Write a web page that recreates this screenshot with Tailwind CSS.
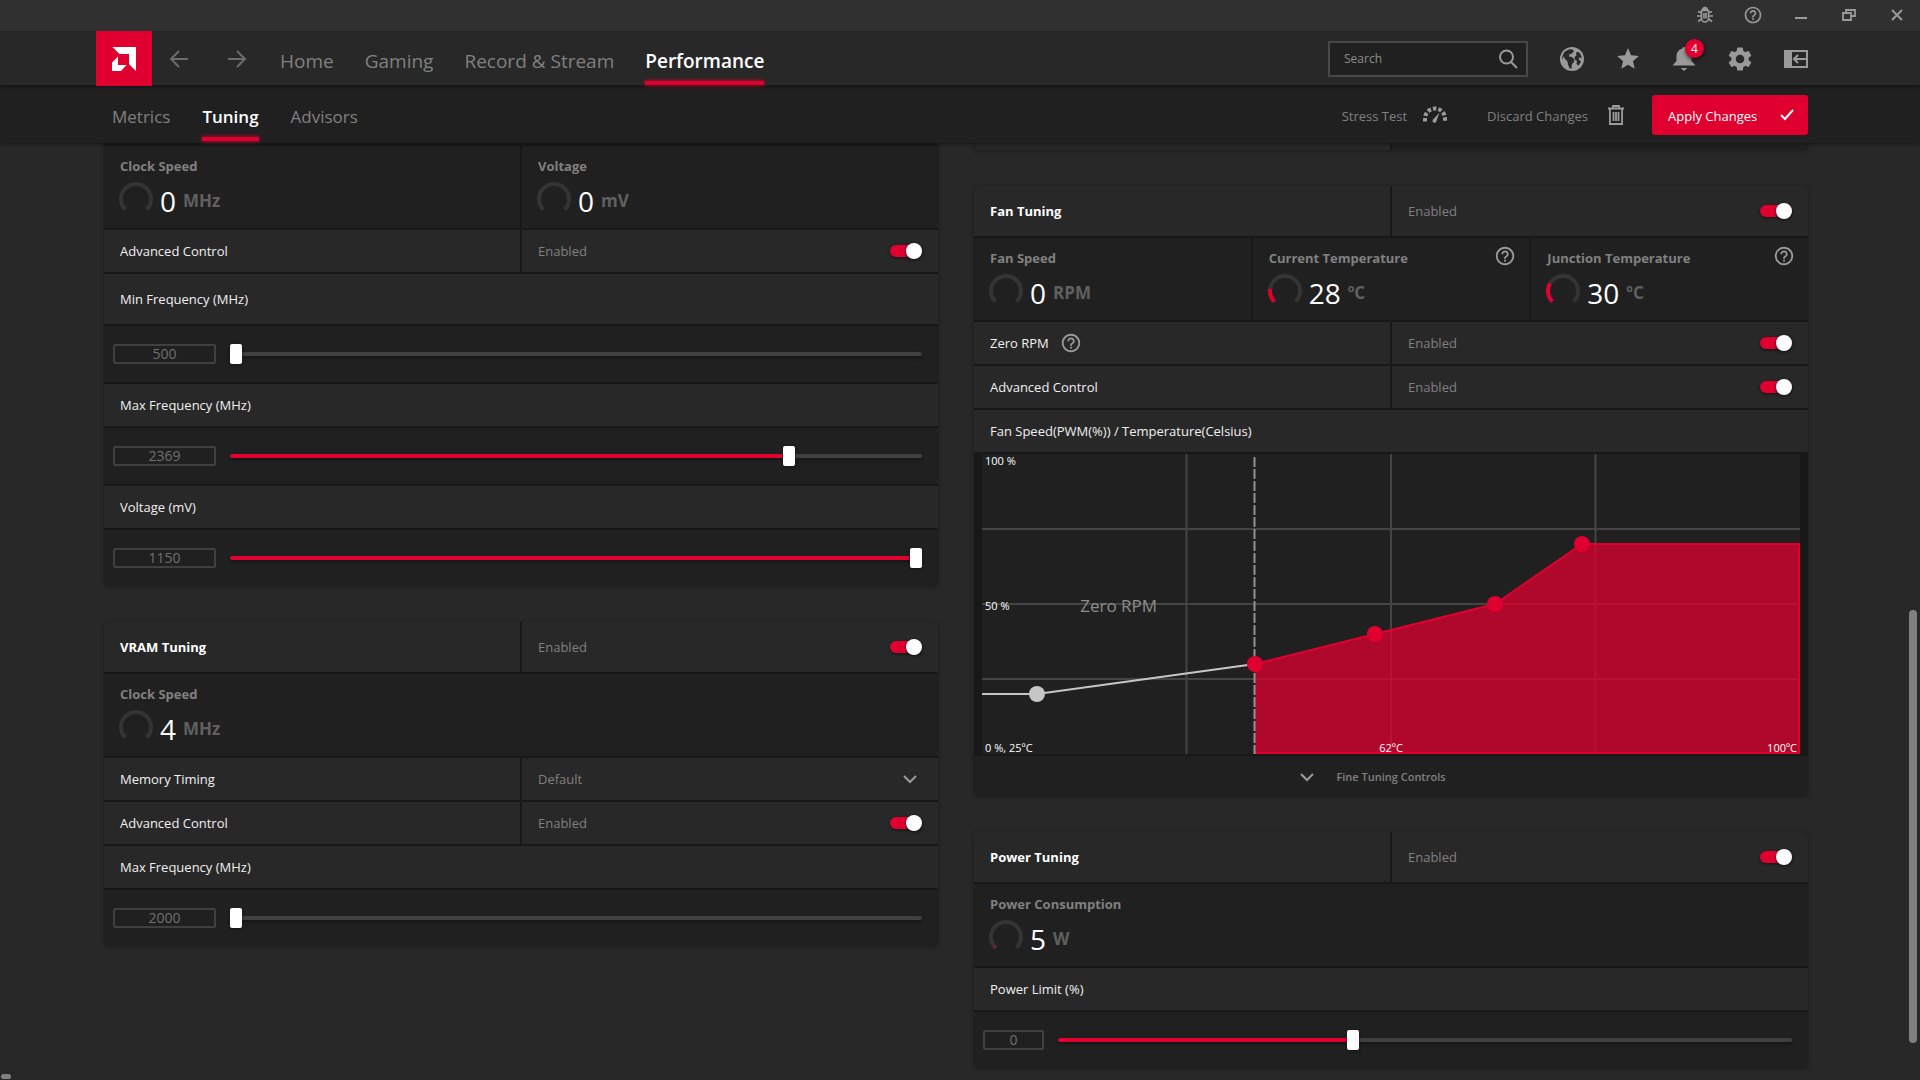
<!DOCTYPE html>
<html lang="en">
<head>
<meta charset="utf-8">
<meta name="viewport" content="width=device-width, initial-scale=1">
<title>Performance – Tuning</title>
<script src="https://cdn.jsdelivr.net/npm/@tailwindcss/browser@4"></script>
</head>
<body class="relative flex h-screen flex-col overflow-hidden bg-[#282828] font-['Open_Sans','Noto_Sans',sans-serif] text-[13px] leading-5 text-[#f0f0f0]">

<!-- Shared icon symbols -->
<svg class="hidden" aria-hidden="true">
  <symbol id="help" viewBox="0 0 24 24"><path fill="currentColor" d="M11 18h2v-2h-2v2zm1-16C6.48 2 2 6.48 2 12s4.48 10 10 10 10-4.48 10-10S17.52 2 12 2zm0 18c-4.41 0-8-3.59-8-8s3.59-8 8-8 8 3.59 8 8-3.59 8-8 8zm0-14c-2.21 0-4 1.79-4 4h2c0-1.1.9-2 2-2s2 .9 2 2c0 2-3 1.75-3 5h2c0-2.25 3-2.5 3-5 0-2.21-1.79-4-4-4z"/></symbol>
  <symbol id="chevron" viewBox="0 0 14 10"><path fill="none" stroke="currentColor" stroke-width="2" d="M1 2l6 6 6-6"/></symbol>
  <symbol id="gauge" viewBox="0 0 34 30"><path fill="none" stroke="#343434" stroke-width="4" d="M6.4 27.6A15 15 0 1 1 27.6 27.6"/></symbol>
</svg>

<!-- Window title bar -->
<div class="flex h-[31px] shrink-0 items-center justify-end bg-[#303030] pb-px pr-[13px] text-[#9a9a9a]">
  <div class="flex gap-7">
    <button aria-label="Report a bug" class="flex size-5 items-center justify-center"><svg class="size-5" viewBox="0 0 20 20" fill="none" stroke="currentColor" stroke-width="1.6"><path d="M6.5 5.5h7v8a3.5 3.5 0 0 1-7 0zM8 5a2 2 0 0 1 4 0M6.500 8L3 6.500M13.500 8L17 6.500M6.500 11H2M13.500 11H18M6.500 14L3 16.500M13.500 14L17 16.500M9 8v5.500M11 8v5.500"/><path fill="currentColor" d="M8 4.500a2 2 0 0 1 4 0z"/></svg></button>
    <button aria-label="Help" class="flex size-5 items-center justify-center"><svg class="size-5"><use href="#help"/></svg></button>
    <button aria-label="Minimize" class="flex size-5 items-center justify-center"><svg class="size-5" viewBox="0 0 20 20"><path fill="currentColor" d="M4 12h12v2H4z"/></svg></button>
    <button aria-label="Restore" class="flex size-5 items-center justify-center"><svg class="size-5" viewBox="0 0 20 20" fill="none" stroke="currentColor" stroke-width="1.800"><path d="M4 8h8v7H4zM7 8V5h9v6h-4"/></svg></button>
    <button aria-label="Close" class="flex size-5 items-center justify-center"><svg class="size-5" viewBox="0 0 20 20" fill="none" stroke="currentColor" stroke-width="2"><path d="M5 5l10 10M15 5L5 15"/></svg></button>
  </div>
</div>

<!-- Main navigation -->
<header class="relative z-20 flex h-[54px] shrink-0 items-center bg-[#282828] pl-24 pr-28 shadow-[0_2px_3px_#141416]">
  <a href="#" aria-label="AMD" class="flex h-[55px] w-14 shrink-0 items-center justify-center self-start bg-[#e0002f]">
    <svg class="size-[26px]" viewBox="0 0 26 26" fill="#fff"><path d="M1.500 1H25v24l-7-7V8H8.500z"/><path d="M7 10.500V19h8.500L10 25H1v-8.500z"/></svg>
  </a>
  <div class="ml-4 flex gap-9 pt-0.5 text-[#6c6c6c]">
    <button aria-label="Back" class="flex size-[22px] items-center justify-center"><svg class="size-5" viewBox="0 0 20 20" fill="none" stroke="currentColor" stroke-width="2"><path d="M19 10H2M10 2l-8 8 8 8"/></svg></button>
    <button aria-label="Forward" class="flex size-[22px] items-center justify-center"><svg class="size-5" viewBox="0 0 20 20" fill="none" stroke="currentColor" stroke-width="2"><path d="M1 10h17M10 2l8 8-8 8"/></svg></button>
  </div>
  <nav class="ml-8 flex h-full gap-[31px] text-[19px] text-[#808080]">
    <a href="#" class="flex items-center pt-1.5">Home</a>
    <a href="#" class="flex items-center pt-1.5">Gaming</a>
    <a href="#" class="flex items-center pt-1.5">Record &amp; Stream</a>
    <a href="#" class="relative flex items-center pt-1.5 font-semibold text-white">Performance<span class="absolute inset-x-0 bottom-0 h-1 bg-[#e0002f] shadow-[0_0_4px_#e0002f]"></span></a>
  </nav>
  <div class="ml-auto flex items-center gap-8 pt-0.5 text-[#9a9a9a]">
    <label class="flex h-9 w-[200px] items-center border-2 border-[#484848] bg-[#202020] pl-3.5 pr-2">
      <input type="search" placeholder="Search" aria-label="Search" class="min-w-0 flex-1 bg-transparent text-xs outline-none placeholder:text-[#8c8c8c]">
      <svg class="size-5" viewBox="0 0 20 20" fill="none" stroke="currentColor" stroke-width="2"><circle cx="8.500" cy="8" r="6.500"/><path d="M13 13l6 6"/></svg>
    </label>
    <button aria-label="Web"><svg class="size-6" viewBox="0 0 24 24"><circle cx="12" cy="12" r="12" fill="currentColor"/><path fill="#282828" d="M9.500 2.200l3 .3 1.500 1.800-2 2.200-2.500.8-.5 2.200 3 .5 2.500 2.500-.5 2.500-2 2-.5 2.500.5 2-2.500-.3-1.500-3.700-.5-3-2.500-2.500L3.500 9.500 2.300 13c-.5-3 .7-6.500 3-8.700zM16 5.500l2.500-.5c1.800 1.500 3 3.800 3.200 6.500l-1.700-1-1.500.5 1 2.500 1.500.5c-.5 2-1.500 3.500-3 4.800l-1.500-2.300.5-2.500-2-1.500-.5-2.500 2-1.500z"/></svg></button>
    <button aria-label="Favorites"><svg class="size-6" viewBox="1 1 22 22"><path fill="currentColor" d="M12 17.270L18.180 21l-1.640-7.030L22 9.240l-7.190-.61L12 2 9.190 8.630 2 9.240l5.460 4.730L5.820 21z"/></svg></button>
    <button aria-label="Notifications" class="relative"><svg class="size-6" viewBox="0 0 24 24"><path fill="currentColor" d="M12 0c-1.200 0-2 .8-2 1.800C6.500 2.800 4.500 5.500 4.500 9v5L.5 18.500h23L19.500 14V9c0-3.500-2-6.200-5.500-7.200C14 .8 13.200 0 12 0zM8.800 21h6.400L12 24z"/></svg><span class="absolute -right-2 -top-2 flex size-[19px] items-center justify-center rounded-full bg-[#e0002f] text-xs text-[#f0f0f0] shadow-[1px_2px_4px_#141414]">4</span></button>
    <button aria-label="Settings"><svg class="size-6" viewBox="2 2 20 20"><path fill="currentColor" d="M19.140 12.940c.04-.3.060-.61.060-.94 0-.32-.02-.64-.07-.94l2.030-1.580c.18-.14.230-.41.120-.61l-1.920-3.320c-.12-.22-.37-.29-.59-.22l-2.390.96c-.5-.38-1.030-.7-1.620-.94L14.400 2.810c-.04-.24-.24-.41-.48-.41h-3.840c-.24 0-.43.17-.47.410L9.250 5.350C8.660 5.590 8.120 5.920 7.630 6.290L5.240 5.330c-.22-.08-.47 0-.59.220L2.740 8.870c-.12.21-.08.47.120.61l2.030 1.580c-.05.3-.09.630-.09.940s.02.640.070.940l-2.030 1.580c-.18.140-.23.410-.12.610l1.920 3.320c.12.220.37.290.59.220l2.390-.96c.5.380 1.030.7 1.620.940l.36 2.540c.05.240.24.410.48.410h3.840c.24 0 .44-.17.470-.41l.36-2.540c.59-.24 1.130-.56 1.620-.94l2.390.96c.22.080.47 0 .59-.22l1.920-3.320c.12-.22.070-.47-.12-.61l-2.010-1.580zM12 15.600c-1.980 0-3.600-1.620-3.600-3.600s1.620-3.600 3.600-3.600 3.600 1.620 3.600 3.600-1.620 3.600-3.600 3.600z"/></svg></button>
    <button aria-label="Toggle sidebar"><svg class="size-6" viewBox="0 0 24 24"><path fill="currentColor" d="M0 3h24v18H0zM8 5v14h14V5z" fill-rule="evenodd"/><path fill="none" stroke="currentColor" stroke-width="2" d="M22 12H10M14 8l-4 4 4 4"/></svg></button>
  </div>
</header>

<!-- Section navigation -->
<div class="relative z-10 flex h-[58px] shrink-0 items-center bg-[#202020] pl-28 pr-28 shadow-[0_1px_3px_#161616]">
  <nav class="flex h-full gap-8 text-[17px] text-[#808080]">
    <a href="#" class="flex items-center pt-1.5">Metrics</a>
    <a href="#" class="relative flex items-center pt-1.5 font-semibold text-white">Tuning<span class="absolute inset-x-0 bottom-0.5 h-1 bg-[#e0002f] shadow-[0_0_4px_#e0002f]"></span></a>
    <a href="#" class="flex items-center pt-1.5">Advisors</a>
  </nav>
  <div class="ml-auto flex items-center pt-0.5 text-[#808080]">
    <button class="flex items-center gap-4"><span class="pt-0.5">Stress Test</span>
      <svg class="size-6" viewBox="0 0 24 24" fill="none" stroke="#9a9a9a"><path stroke-width="4" stroke-dasharray="3.500 2" d="M2 18.500v-3a10 10 0 0 1 20 0v3"/><path fill="#9a9a9a" stroke="none" d="M16.500 9.500l-3 8.500a2 2 0 1 1-3-2z"/></svg>
    </button>
    <button class="ml-10 flex items-center gap-5"><span class="pt-0.5">Discard Changes</span>
      <svg class="h-5 w-4" viewBox="0 0 16 20" fill="none" stroke="#9a9a9a" stroke-width="1.800"><path d="M0 3.500h16M5 3V1h6v2M1.900 4v15h12.200V4M5.500 7v9M8 7v9M10.500 7v9"/></svg>
    </button>
    <button class="ml-7 flex h-10 w-[156px] items-center justify-between rounded-[3px] bg-[#e0002f] pl-4 pr-3.5 text-white"><span class="pt-0.5">Apply Changes</span>
      <svg class="h-3 w-3.5" viewBox="0 0 14 12" fill="none" stroke="#fff" stroke-width="2"><path d="M1 6l4 4 8-9"/></svg>
    </button>
  </div>
</div>

<!-- Tuning cards -->
<main class="grid grid-cols-2 items-start gap-9 pl-[104px] pr-28">

  <div class="flex flex-col gap-9">
    <!-- GPU tuning, scrolled under the header -->
    <section class="grid grid-cols-2 gap-0.5 overflow-hidden rounded-b-md bg-[#181818] pt-[3px] shadow-[0_1px_4px_#1a1a1a]">
      <div class="flex h-[82px] flex-col bg-[#202020] px-4 pt-2.5">
        <h3 class="font-bold text-[#808080]">Clock Speed</h3>
        <div class="flex items-start gap-[7px] pt-1.5"><svg class="-ml-px h-[30px] w-[34px]"><use href="#gauge"/></svg><span class="pt-1 text-[28px] leading-[30px] text-white">0</span><span class="pt-1 text-[17px] font-bold leading-[30px] text-[#606060]">MHz</span></div>
      </div>
      <div class="flex h-[82px] flex-col bg-[#202020] px-4 pt-2.5">
        <h3 class="font-bold text-[#808080]">Voltage</h3>
        <div class="flex items-start gap-[7px] pt-1.5"><svg class="-ml-px h-[30px] w-[34px]"><use href="#gauge"/></svg><span class="pt-1 text-[28px] leading-[30px] text-white">0</span><span class="pt-1 text-[17px] font-bold leading-[30px] text-[#606060]">mV</span></div>
      </div>
      <div class="flex h-[42px] items-center bg-[#282828] px-4">Advanced Control</div>
      <label class="flex h-[42px] items-center justify-between bg-[#282828] px-4 text-[#808080]">Enabled<input type="checkbox" checked class="relative h-3 w-8 appearance-none rounded-full bg-[#e0002f] shadow-[0_1px_3px_#141414] before:absolute before:-top-0.5 before:right-0 before:size-4 before:rounded-full before:bg-white before:shadow-[0_1px_3px_#141414]"></label>
      <label for="gpu-min" class="col-span-2 flex h-[50px] items-center bg-[#282828] px-4">Min Frequency (MHz)</label>
      <div class="col-span-2 flex h-14 items-center gap-3.5 bg-[#202020] pl-[9px] pr-4">
        <input id="gpu-min" type="text" value="500" class="h-5 w-[103px] rounded-xs border-2 border-[#404040] bg-transparent text-center text-sm text-[#707070]">
        <input type="range" aria-label="Min Frequency" min="500" max="2800" value="500" style="background:#404040" class="h-1 min-w-0 flex-1 appearance-none rounded-full shadow-[0_2px_3px_#161616] [&::-webkit-slider-thumb]:h-5 [&::-webkit-slider-thumb]:w-3 [&::-webkit-slider-thumb]:appearance-none [&::-webkit-slider-thumb]:rounded-xs [&::-webkit-slider-thumb]:bg-white [&::-webkit-slider-thumb]:shadow-[0_1px_3px_#141414]">
      </div>
      <label for="gpu-max" class="col-span-2 flex h-[42px] items-center bg-[#282828] px-4">Max Frequency (MHz)</label>
      <div class="col-span-2 flex h-14 items-center gap-3.5 bg-[#202020] pl-[9px] pr-4">
        <input id="gpu-max" type="text" value="2369" class="h-5 w-[103px] rounded-xs border-2 border-[#404040] bg-transparent text-center text-sm text-[#707070]">
        <input type="range" aria-label="Max Frequency" min="500" max="2800" value="2369" style="background:linear-gradient(90deg,#e0002f 81%,#404040 81%)" class="h-1 min-w-0 flex-1 appearance-none rounded-full shadow-[0_2px_3px_#161616] [&::-webkit-slider-thumb]:h-5 [&::-webkit-slider-thumb]:w-3 [&::-webkit-slider-thumb]:appearance-none [&::-webkit-slider-thumb]:rounded-xs [&::-webkit-slider-thumb]:bg-white [&::-webkit-slider-thumb]:shadow-[0_1px_3px_#141414]">
      </div>
      <label for="gpu-mv" class="col-span-2 flex h-[42px] items-center bg-[#282828] px-4">Voltage (mV)</label>
      <div class="col-span-2 flex h-14 items-center gap-3.5 bg-[#202020] pl-[9px] pr-4">
        <input id="gpu-mv" type="text" value="1150" class="h-5 w-[103px] rounded-xs border-2 border-[#404040] bg-transparent text-center text-sm text-[#707070]">
        <input type="range" aria-label="Voltage" min="800" max="1150" value="1150" style="background:#e0002f" class="h-1 min-w-0 flex-1 appearance-none rounded-full shadow-[0_2px_3px_#161616] [&::-webkit-slider-thumb]:h-5 [&::-webkit-slider-thumb]:w-3 [&::-webkit-slider-thumb]:appearance-none [&::-webkit-slider-thumb]:rounded-xs [&::-webkit-slider-thumb]:bg-white [&::-webkit-slider-thumb]:shadow-[0_1px_3px_#141414]">
      </div>
    </section>

    <!-- VRAM tuning -->
    <section class="grid grid-cols-2 gap-0.5 overflow-hidden rounded-md bg-[#181818] shadow-[0_1px_4px_#1a1a1a]">
      <h2 class="flex h-[50px] items-center bg-[#282828] px-4 font-bold text-white">VRAM Tuning</h2>
      <label class="flex h-[50px] items-center justify-between bg-[#282828] px-4 text-[#808080]">Enabled<input type="checkbox" checked class="relative h-3 w-8 appearance-none rounded-full bg-[#e0002f] shadow-[0_1px_3px_#141414] before:absolute before:-top-0.5 before:right-0 before:size-4 before:rounded-full before:bg-white before:shadow-[0_1px_3px_#141414]"></label>
      <div class="col-span-2 flex h-[82px] flex-col bg-[#202020] px-4 pt-2.5">
        <h3 class="font-bold text-[#808080]">Clock Speed</h3>
        <div class="flex items-start gap-[7px] pt-1.5"><svg class="-ml-px h-[30px] w-[34px]"><use href="#gauge"/></svg><span class="pt-1 text-[28px] leading-[30px] text-white">4</span><span class="pt-1 text-[17px] font-bold leading-[30px] text-[#606060]">MHz</span></div>
      </div>
      <label for="timing" class="flex h-[42px] items-center bg-[#282828] px-4">Memory Timing</label>
      <div class="relative flex h-[42px] items-center bg-[#282828] text-[#808080]">
        <select id="timing" class="size-full appearance-none bg-transparent px-4"><option>Default</option></select>
        <svg class="pointer-events-none absolute right-[21px] h-2.5 w-3.5 text-[#9a9a9a]"><use href="#chevron"/></svg>
      </div>
      <div class="flex h-[42px] items-center bg-[#282828] px-4">Advanced Control</div>
      <label class="flex h-[42px] items-center justify-between bg-[#282828] px-4 text-[#808080]">Enabled<input type="checkbox" checked class="relative h-3 w-8 appearance-none rounded-full bg-[#e0002f] shadow-[0_1px_3px_#141414] before:absolute before:-top-0.5 before:right-0 before:size-4 before:rounded-full before:bg-white before:shadow-[0_1px_3px_#141414]"></label>
      <label for="vram-max" class="col-span-2 flex h-[42px] items-center bg-[#282828] px-4">Max Frequency (MHz)</label>
      <div class="col-span-2 flex h-14 items-center gap-3.5 bg-[#202020] pl-[9px] pr-4">
        <input id="vram-max" type="text" value="2000" class="h-5 w-[103px] rounded-xs border-2 border-[#404040] bg-transparent text-center text-sm text-[#707070]">
        <input type="range" aria-label="Max Frequency" min="2000" max="2150" value="2000" style="background:#404040" class="h-1 min-w-0 flex-1 appearance-none rounded-full shadow-[0_2px_3px_#161616] [&::-webkit-slider-thumb]:h-5 [&::-webkit-slider-thumb]:w-3 [&::-webkit-slider-thumb]:appearance-none [&::-webkit-slider-thumb]:rounded-xs [&::-webkit-slider-thumb]:bg-white [&::-webkit-slider-thumb]:shadow-[0_1px_3px_#141414]">
      </div>
    </section>
  </div>

  <div class="flex flex-col gap-9">
    <!-- Tail of the card scrolled under the header -->
    <section class="grid h-[7px] grid-cols-2 gap-0.5 overflow-hidden rounded-b-md bg-[#181818] shadow-[0_1px_4px_#1a1a1a]">
      <div class="bg-[#282828]"></div><div class="bg-[#202020]"></div>
    </section>

    <!-- Fan tuning -->
    <section class="grid grid-cols-2 gap-0.5 overflow-hidden rounded-md bg-[#181818] shadow-[0_1px_4px_#1a1a1a]">
      <h2 class="flex h-[50px] items-center bg-[#282828] px-4 font-bold text-white">Fan Tuning</h2>
      <label class="flex h-[50px] items-center justify-between bg-[#282828] px-4 text-[#808080]">Enabled<input type="checkbox" checked class="relative h-3 w-8 appearance-none rounded-full bg-[#e0002f] shadow-[0_1px_3px_#141414] before:absolute before:-top-0.5 before:right-0 before:size-4 before:rounded-full before:bg-white before:shadow-[0_1px_3px_#141414]"></label>
      <div class="col-span-2 grid grid-cols-3 gap-0.5">
        <div class="flex h-[82px] flex-col bg-[#202020] px-4 pt-2.5">
          <h3 class="font-bold text-[#808080]">Fan Speed</h3>
          <div class="flex items-start gap-[7px] pt-1.5"><svg class="-ml-px h-[30px] w-[34px]"><use href="#gauge"/></svg><span class="pt-1 text-[28px] leading-[30px] text-white">0</span><span class="pt-1 text-[17px] font-bold leading-[30px] text-[#606060]">RPM</span></div>
        </div>
        <div class="relative flex h-[82px] flex-col bg-[#202020] px-4 pt-2.5">
          <h3 class="font-bold text-[#808080]">Current Temperature</h3>
          <button aria-label="About current temperature" class="absolute right-[13px] top-[7px] text-[#9a9a9a]"><svg class="size-[22px]"><use href="#help"/></svg></button>
          <div class="flex items-start gap-[7px] pt-1.5"><svg class="-ml-px h-[30px] w-[34px]" viewBox="0 0 34 30"><use href="#gauge"/><path fill="none" stroke="#e0002f" stroke-width="4" d="M6.400 27.600A15 15 0 0 1 2.200 15"/></svg><span class="pt-1 text-[28px] leading-[30px] text-white">28</span><span class="pt-1 text-[17px] font-bold leading-[30px] text-[#606060]">ºC</span></div>
        </div>
        <div class="relative flex h-[82px] flex-col bg-[#202020] px-4 pt-2.5">
          <h3 class="font-bold text-[#808080]">Junction Temperature</h3>
          <button aria-label="About junction temperature" class="absolute right-[13px] top-[7px] text-[#9a9a9a]"><svg class="size-[22px]"><use href="#help"/></svg></button>
          <div class="flex items-start gap-[7px] pt-1.5"><svg class="-ml-px h-[30px] w-[34px]" viewBox="0 0 34 30"><use href="#gauge"/><path fill="none" stroke="#e0002f" stroke-width="4" d="M6.400 27.600A15 15 0 0 1 4 9.500"/></svg><span class="pt-1 text-[28px] leading-[30px] text-white">30</span><span class="pt-1 text-[17px] font-bold leading-[30px] text-[#606060]">ºC</span></div>
        </div>
      </div>
      <div class="flex h-[42px] items-center gap-[11px] bg-[#282828] px-4">Zero RPM<button aria-label="About Zero RPM" class="text-[#9a9a9a]"><svg class="size-[22px]"><use href="#help"/></svg></button></div>
      <label class="flex h-[42px] items-center justify-between bg-[#282828] px-4 text-[#808080]">Enabled<input type="checkbox" checked class="relative h-3 w-8 appearance-none rounded-full bg-[#e0002f] shadow-[0_1px_3px_#141414] before:absolute before:-top-0.5 before:right-0 before:size-4 before:rounded-full before:bg-white before:shadow-[0_1px_3px_#141414]"></label>
      <div class="flex h-[42px] items-center bg-[#282828] px-4">Advanced Control</div>
      <label class="flex h-[42px] items-center justify-between bg-[#282828] px-4 text-[#808080]">Enabled<input type="checkbox" checked class="relative h-3 w-8 appearance-none rounded-full bg-[#e0002f] shadow-[0_1px_3px_#141414] before:absolute before:-top-0.5 before:right-0 before:size-4 before:rounded-full before:bg-white before:shadow-[0_1px_3px_#141414]"></label>
      <h3 class="col-span-2 flex h-[42px] items-center bg-[#282828] px-4">Fan Speed(PWM(%)) / Temperature(Celsius)</h3>

      <!-- Fan curve -->
      <div class="relative col-span-2 mx-2 h-[300px] bg-[#202020] text-[11px] leading-3 text-white">
        <svg class="block size-full">
          <g stroke="#444" stroke-width="2">
            <line x1="0" x2="100%" y1="75" y2="75"/><line x1="0" x2="100%" y1="150" y2="150"/><line x1="0" x2="100%" y1="225" y2="225"/>
            <line x1="25%" x2="25%" y1="0" y2="300"/><line x1="50%" x2="50%" y1="0" y2="300"/><line x1="75%" x2="75%" y1="0" y2="300"/>
          </g>
          <svg width="100%" height="300" viewBox="0 0 818 300" preserveAspectRatio="none">
            <path d="M273 210L393 180 513 150 600 90H818V300H273z" fill="#e0002f" fill-opacity=".75"/>
            <path d="M273 210L393 180 513 150 600 90H817V299H273" fill="none" stroke="#e0002f" stroke-width="2"/>
            <path d="M0 240H55L273 210" fill="none" stroke="#c6c6c6" stroke-width="2"/>
            <path d="M272.500 3V300" stroke="#929292" stroke-width="2" stroke-dasharray="10 2"/>
          </svg>
          <circle cx="6.720%" cy="240" r="8" fill="#c6c6c6"/>
          <g fill="#e0002f"><circle cx="33.370%" cy="210" r="8"/><circle cx="48.040%" cy="180" r="8"/><circle cx="62.710%" cy="150" r="8"/><circle cx="73.350%" cy="90" r="8"/></g>
        </svg>
        <span class="absolute left-[3px] top-px">100 %</span>
        <div class="absolute inset-x-[3px] top-0.5 flex h-full items-center">50 %</div>
        <span class="absolute bottom-0 left-[3px]">0 %, 25ºC</span>
        <span class="absolute bottom-0 left-1/2 -translate-x-1/2">62ºC</span>
        <span class="absolute bottom-0 right-[3px]">100ºC</span>
        <div class="absolute left-[12%] top-0.5 flex h-full items-center text-[17px] text-[#8c8c8c]">Zero RPM</div>
      </div>
      <button class="col-span-2 flex h-10 items-center justify-center gap-[22px] bg-[#202020] pr-9 pt-0.5 text-[11px] font-semibold text-[#808080]"><svg class="h-2.5 w-3.5 text-[#9a9a9a]"><use href="#chevron"/></svg>Fine Tuning Controls</button>
    </section>

    <!-- Power tuning -->
    <section class="grid grid-cols-2 gap-0.5 overflow-hidden rounded-md bg-[#181818] shadow-[0_1px_4px_#1a1a1a]">
      <h2 class="flex h-[50px] items-center bg-[#282828] px-4 font-bold text-white">Power Tuning</h2>
      <label class="flex h-[50px] items-center justify-between bg-[#282828] px-4 text-[#808080]">Enabled<input type="checkbox" checked class="relative h-3 w-8 appearance-none rounded-full bg-[#e0002f] shadow-[0_1px_3px_#141414] before:absolute before:-top-0.5 before:right-0 before:size-4 before:rounded-full before:bg-white before:shadow-[0_1px_3px_#141414]"></label>
      <div class="col-span-2 flex h-[82px] flex-col bg-[#202020] px-4 pt-2.5">
        <h3 class="font-bold text-[#808080]">Power Consumption</h3>
        <div class="flex items-start gap-[7px] pt-1.5"><svg class="-ml-px h-[30px] w-[34px]" viewBox="0 0 34 30"><use href="#gauge"/><path fill="none" stroke="#e0002f" stroke-width="4" d="M6.400 27.600L5.700 26.900"/></svg><span class="pt-1 text-[28px] leading-[30px] text-white">5</span><span class="pt-1 text-[17px] font-bold leading-[30px] text-[#606060]">W</span></div>
      </div>
      <label for="power" class="col-span-2 flex h-[42px] items-center bg-[#282828] px-4">Power Limit (%)</label>
      <div class="col-span-2 flex h-14 items-center gap-3.5 bg-[#202020] pl-[9px] pr-4">
        <input id="power" type="text" value="0" class="h-5 w-[61px] rounded-xs border-2 border-[#404040] bg-transparent text-center text-sm text-[#707070]">
        <input type="range" aria-label="Power Limit" min="-6" max="9" value="0" style="background:linear-gradient(90deg,#e0002f 40%,#404040 40%)" class="h-1 min-w-0 flex-1 appearance-none rounded-full shadow-[0_2px_3px_#161616] [&::-webkit-slider-thumb]:h-5 [&::-webkit-slider-thumb]:w-3 [&::-webkit-slider-thumb]:appearance-none [&::-webkit-slider-thumb]:rounded-xs [&::-webkit-slider-thumb]:bg-white [&::-webkit-slider-thumb]:shadow-[0_1px_3px_#141414]">
      </div>
    </section>
  </div>
</main>

<!-- Scroll thumbs -->
<div class="absolute bottom-[37px] right-[3px] h-[433px] w-2 rounded-full bg-[#808080]"></div>
<div class="absolute bottom-px left-px h-[5px] w-2.5 rounded-full bg-[#808080]"></div>
</body>
</html>
